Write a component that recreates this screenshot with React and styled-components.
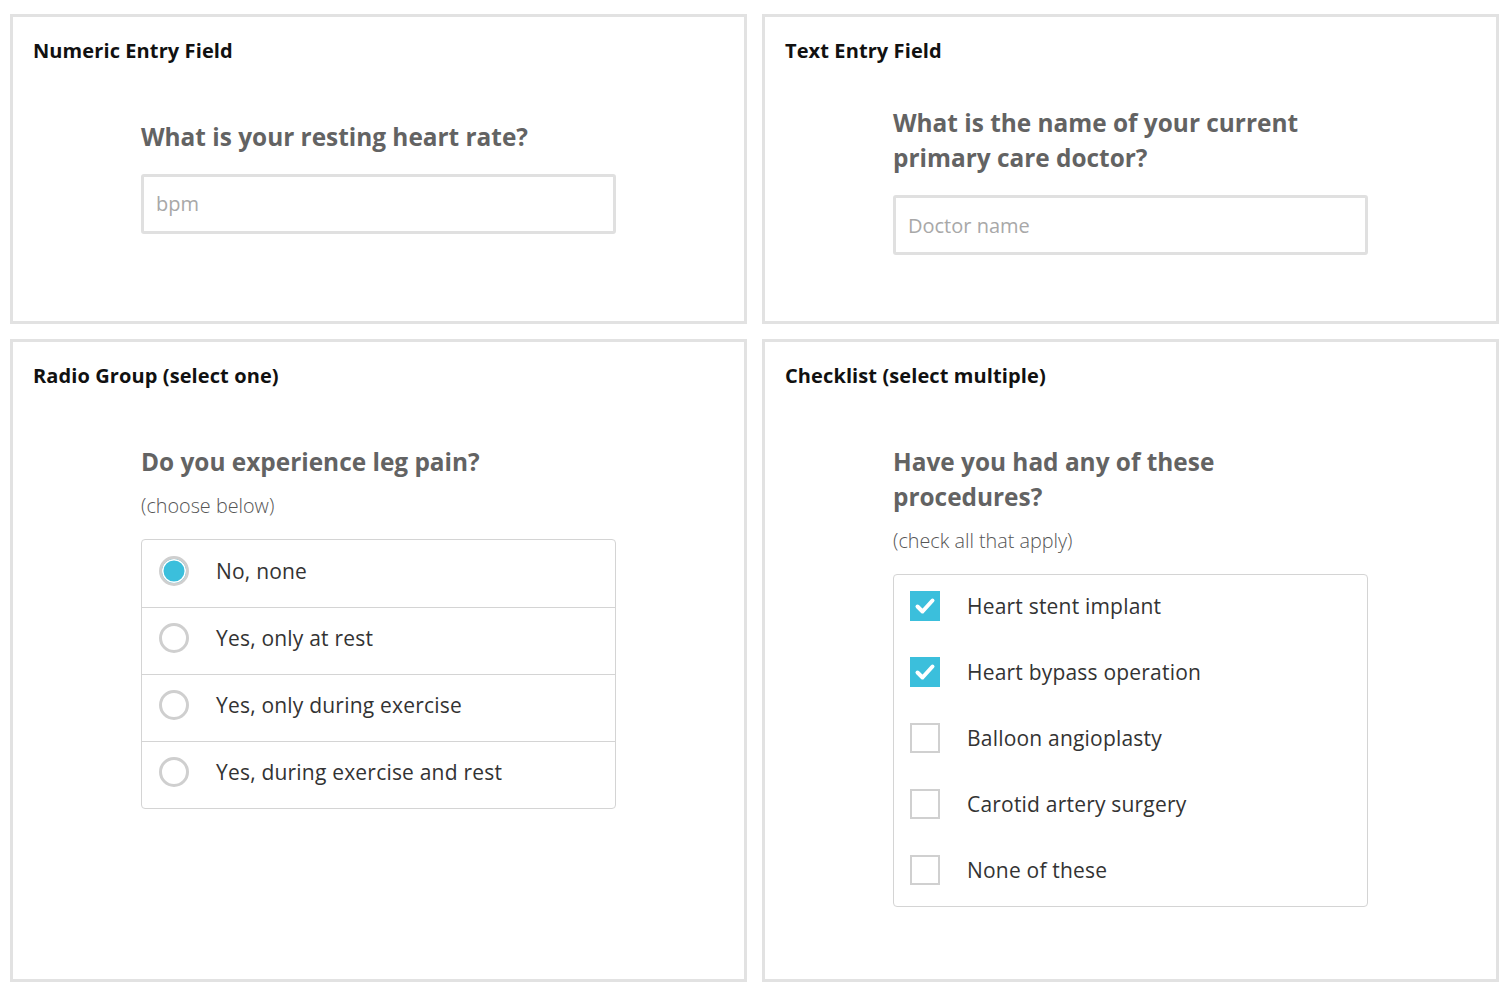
import styled, { createGlobalStyle } from "styled-components";

const ACCENT = "#3bbfdc";

const radioOptions = [
  "No, none",
  "Yes, only at rest",
  "Yes, only during exercise",
  "Yes, during exercise and rest",
];

const checkOptions = [
  { label: "Heart stent implant", checked: true },
  { label: "Heart bypass operation", checked: true },
  { label: "Balloon angioplasty", checked: false },
  { label: "Carotid artery surgery", checked: false },
  { label: "None of these", checked: false },
];

const CheckMark = () => (
  <svg width="24" height="24" viewBox="0 0 24 24">
    <path
      d="M4.5 12.5 L9.5 17.5 L19.5 6.5"
      fill="none"
      stroke="#fff"
      strokeWidth="4"
      strokeLinecap="round"
      strokeLinejoin="round"
    />
  </svg>
);

const App = () => {
  return (
    <>
      <GlobalStyle />
      <Page>
        <Panel>
          <PanelTitle>Numeric Entry Field</PanelTitle>
          <Body $center $pb={13}>
            <Question>What is your resting heart rate?</Question>
            <TextInput placeholder="bpm" />
          </Body>
        </Panel>
        <Panel>
          <PanelTitle>Text Entry Field</PanelTitle>
          <Body $center $pb={5}>
            <Question>What is the name of your current primary care doctor?</Question>
            <TextInput placeholder="Doctor name" />
          </Body>
        </Panel>
        <Panel>
          <PanelTitle>Radio Group (select one)</PanelTitle>
          <Body>
            <Question>Do you experience leg pain?</Question>
            <Hint>(choose below)</Hint>
            <OptionList>
              {radioOptions.map((opt, i) => (
                <RadioRow key={opt}>
                  <Radio $checked={i === 0} />
                  <OptionLabel>{opt}</OptionLabel>
                </RadioRow>
              ))}
            </OptionList>
          </Body>
        </Panel>
        <Panel>
          <PanelTitle>Checklist (select multiple)</PanelTitle>
          <Body>
            <Question>Have you had any of these procedures?</Question>
            <Hint>(check all that apply)</Hint>
            <CheckList>
              {checkOptions.map((opt) => (
                <CheckRow key={opt.label}>
                  <CheckBox $checked={opt.checked}>
                    {opt.checked && <CheckMark />}
                  </CheckBox>
                  <OptionLabel>{opt.label}</OptionLabel>
                </CheckRow>
              ))}
            </CheckList>
          </Body>
        </Panel>
      </Page>
    </>
  );
};

const GlobalStyle = createGlobalStyle`
  * { box-sizing: border-box; }
  html, body {
    margin: 0;
    background: #fff;
    font-family: "Open Sans", "Noto Sans", sans-serif;
  }
`;

const Page = styled.div`
  display: grid;
  grid-template-columns: 737px 737px;
  grid-template-rows: 310px 643px;
  column-gap: 15px;
  row-gap: 15px;
  padding: 14px 0 0 10px;
`;

const Panel = styled.section`
  display: flex;
  flex-direction: column;
  border: 3px solid #e2e2e2;
  padding: 20px 20px 20px;
`;

const PanelTitle = styled.h2`
  margin: 0;
  font-size: 20px;
  line-height: 27px;
  font-weight: 700;
  color: #111;
  letter-spacing: 0.1px;
`;

const Body = styled.div`
  width: 475px;
  align-self: center;
  display: flex;
  flex-direction: column;
  flex: ${(p) => (p.$center ? "1" : "0 0 auto")};
  justify-content: ${(p) => (p.$center ? "center" : "flex-start")};
  margin-top: ${(p) => (p.$center ? "0" : "55px")};
  padding-bottom: ${(p) => p.$pb || 0}px;
`;

const Question = styled.h3`
  margin: 0;
  font-size: 24.4px;
  line-height: 35px;
  font-weight: 700;
  color: #636363;
`;

const Hint = styled.p`
  margin: 15px 0 21px;
  font-size: 19.8px;
  line-height: 24px;
  font-weight: 300;
  color: #555;
`;

const TextInput = styled.input`
  margin-top: 20px;
  width: 100%;
  height: 60px;
  border: 3px solid #e0e0e0;
  border-radius: 3px;
  padding: 0 12px;
  font-family: inherit;
  font-size: 20px;
  font-weight: 400;
  color: #333;
  outline: none;
  &::placeholder {
    color: #a8a8a8;
  }
`;

const OptionList = styled.div`
  border: 1px solid #d4d4d4;
  border-radius: 4px;
  display: flex;
  flex-direction: column;
`;

const RadioRow = styled.label`
  display: flex;
  align-items: center;
  height: 67px;
  padding: 0 0 6px 17px;
  gap: 27px;
  & + & {
    border-top: 1px solid #d4d4d4;
  }
`;

const Radio = styled.span`
  width: 30px;
  height: 30px;
  flex: none;
  border-radius: 50%;
  border: 3px solid #cfcfcf;
  background: ${(p) => (p.$checked ? ACCENT : "#fff")};
  box-shadow: ${(p) => (p.$checked ? "inset 0 0 0 1.5px #fff" : "none")};
`;

const OptionLabel = styled.span`
  font-size: 21px;
  color: #333;
  letter-spacing: 0.2px;
`;

const CheckList = styled.div`
  border: 1px solid #d4d4d4;
  border-radius: 4px;
  padding: 0 0 1px 16px;
  display: flex;
  flex-direction: column;
`;

const CheckRow = styled.label`
  display: flex;
  align-items: center;
  height: 66px;
  padding-bottom: 4px;
  gap: 27px;
`;

const CheckBox = styled.span`
  width: 30px;
  height: 30px;
  flex: none;
  display: flex;
  align-items: center;
  justify-content: center;
  background: ${(p) => (p.$checked ? ACCENT : "#fff")};
  border: ${(p) => (p.$checked ? "none" : "2.5px solid #d0d0d0")};
`;

export default App;
